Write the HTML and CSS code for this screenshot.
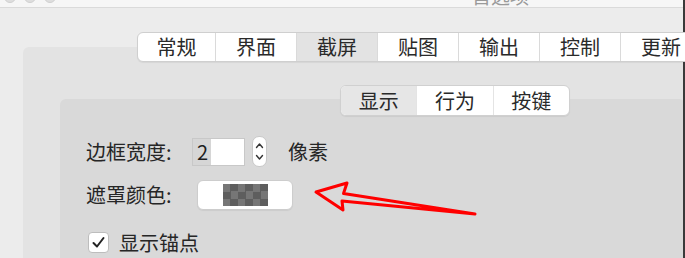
FILE: index.html
```html
<!DOCTYPE html>
<html lang="zh">
<head>
<meta charset="utf-8">
<title>首选项</title>
<link rel="stylesheet" href="styles.css">
</head>
<body>
<div class="window">
  <div class="titlebar">
    <div class="lights"><span></span><span></span><span></span></div>
    <div class="title">首选项</div>
  </div>
  <div class="content">
    <div class="tabbar">
      <div class="seg first">常规</div>
      <div class="seg">界面</div>
      <div class="seg active">截屏</div>
      <div class="seg">贴图</div>
      <div class="seg">输出</div>
      <div class="seg">控制</div>
      <div class="seg">更新</div>
    </div>
    <div class="pane">
      <div class="subtabbar">
        <div class="sseg active">显示</div>
        <div class="sseg mid">行为</div>
        <div class="sseg">按键</div>
      </div>
      <div class="subpane">
        <div class="row row1">
          <span class="label">边框宽度:</span>
          <div class="input"><span class="sel">2</span></div>
          <div class="stepper">
            <svg width="13" height="29" viewBox="0 0 13 29"><path d="M3.5 10.5 L6.5 7 L9.5 10.5" fill="none" stroke="#333" stroke-width="1.4" stroke-linecap="round" stroke-linejoin="round"/><path d="M3.5 18.5 L6.5 22 L9.5 18.5" fill="none" stroke="#333" stroke-width="1.4" stroke-linecap="round" stroke-linejoin="round"/></svg>
          </div>
          <span class="unit">像素</span>
        </div>
        <div class="row row2">
          <span class="label">遮罩颜色:</span>
          <div class="colorbtn"><div class="swatch"></div></div>
        </div>
        <div class="row row3">
          <div class="checkbox">
            <svg width="19" height="19" viewBox="0 0 19 19"><path d="M4.5 10 L8 13.5 L14.5 5" fill="none" stroke="#222" stroke-width="2" stroke-linecap="round" stroke-linejoin="round"/></svg>
          </div>
          <span class="cblabel">显示锚点</span>
        </div>
      </div>
    </div>
  </div>
  <svg class="arrow" width="685" height="258" viewBox="0 0 685 258">
    <path d="M316 192 L347 183 L343.5 193.5 L475 214 L342 201 L343 210 Z" fill="none" stroke="#ff0000" stroke-width="3" stroke-linejoin="round"/>
  </svg>
  <div class="edge"></div>
</div>
</body>
</html>
```
FILE: styles.css
```css
* { box-sizing: border-box; }
html, body { margin: 0; padding: 0; }
body {
  width: 685px;
  height: 258px;
  overflow: hidden;
  background: #ececec;
  font-family: "Noto Sans CJK SC", "Noto Sans", sans-serif;
  color: #262626;
}
.window {
  position: relative;
  width: 685px;
  height: 258px;
  overflow: hidden;
}
.titlebar {
  height: 8px;
  background: #f6f6f6;
  border-bottom: 1px solid #dadada;
  display: flex;
  align-items: flex-end;
  overflow: hidden;
}
.lights {
  display: flex;
  gap: 8px;
  margin-left: 4px;
  margin-bottom: 4px;
}
.lights span {
  width: 12px;
  height: 12px;
  border-radius: 50%;
  background: #dedede;
  border: 1px solid #d0d0d0;
}
.title {
  margin-left: 416px;
  margin-bottom: 1px;
  font-size: 19px;
  line-height: 20px;
  color: #9a9a9a;
  flex-shrink: 0;
}
.content {
  padding-top: 24px;
}
.tabbar {
  position: relative;
  z-index: 1;
  display: flex;
  width: max-content;
  height: 30px;
  margin-left: 137px;
  background: #fff;
  border: 1px solid #cfcfcf;
  border-radius: 6px;
  box-shadow: 0 1px 1px rgba(0,0,0,0.06);
  overflow: hidden;
}
.seg {
  width: 81px;
  flex-shrink: 0;
  display: flex;
  align-items: center;
  justify-content: center;
  border-left: 1px solid #dadada;
  font-size: 20px;
  line-height: 1;
  color: #2a2a2a;
}
.seg.first { width: 77px; border-left: 0; }
.seg.active { background: #e3e3e3; }
.pane {
  margin-top: -15px;
  margin-left: 23px;
  height: 260px;
  background: #e3e3e3;
  border-radius: 6px;
  padding-top: 38px;
  padding-left: 37px;
}
.subtabbar {
  position: relative;
  z-index: 1;
  display: flex;
  width: 230px;
  height: 31px;
  margin-left: 280px;
  background: #fff;
  border: 1px solid #d0d0d0;
  border-radius: 6px;
  box-shadow: 0 1px 1px rgba(0,0,0,0.06);
  overflow: hidden;
}
.sseg {
  width: 76px;
  display: flex;
  align-items: center;
  justify-content: center;
  font-size: 20px;
  line-height: 1;
  color: #2a2a2a;
}
.sseg.mid {
  width: 78px;
  border-left: 1px solid #e4e4e4;
  border-right: 1px solid #e4e4e4;
}
.sseg.active { background: #e6e6e6; }
.subpane {
  margin-top: -17px;
  height: 200px;
  background: #d9d9d9;
  border-radius: 6px;
  padding-top: 37px;
}
.row {
  display: flex;
  align-items: center;
}
.label {
  font-size: 20px;
  line-height: 1;
  color: #262626;
}
.row1 { height: 31px; padding-left: 26px; }
.row1 .label { width: 106px; }
.input {
  width: 53px;
  height: 28px;
  background: #fff;
  border: 1px solid #c8c8c8;
  display: flex;
  align-items: stretch;
}
.sel {
  background: #d6d6d6;
  padding: 0 3px 0 4px;
  font-size: 20px;
  line-height: 26px;
  color: #1e1e1e;
}
.stepper {
  margin-left: 7px;
  width: 15px;
  height: 31px;
  background: #fff;
  border: 1px solid #c9c9c9;
  border-radius: 7px;
  display: flex;
  align-items: center;
  justify-content: center;
}
.stepper svg { display: block; }
.unit {
  margin-left: 21px;
  font-size: 20px;
  line-height: 1;
}
.row2 { margin-top: 13px; height: 30px; padding-left: 26px; }
.row2 .label { width: 111px; }
.colorbtn {
  width: 96px;
  height: 30px;
  background: #fff;
  border: 1px solid #cdcdcd;
  border-radius: 6px;
  box-shadow: 0 1px 1px rgba(0,0,0,0.06);
  display: flex;
  align-items: center;
  justify-content: center;
}
.swatch {
  width: 45px;
  height: 22px;
  background-color: #6b6b6b;
  background-image: repeating-conic-gradient(#5e5e5e 0 25%, #767676 0 50%);
  background-size: 15px 15px;
}
.row3 { margin-top: 22px; height: 21px; padding-left: 28px; }
.checkbox {
  width: 21px;
  height: 21px;
  background: #fff;
  border: 1px solid #bdbdbd;
  border-radius: 4px;
  display: flex;
  align-items: center;
  justify-content: center;
}
.checkbox svg { display: block; }
.cblabel {
  margin-left: 10px;
  font-size: 20px;
  line-height: 1;
}
.arrow {
  position: absolute;
  left: 0;
  top: 0;
  pointer-events: none;
}
.edge {
  position: absolute;
  top: 0;
  right: 0;
  width: 2px;
  height: 258px;
  background: #3a3a3a;
}
```
